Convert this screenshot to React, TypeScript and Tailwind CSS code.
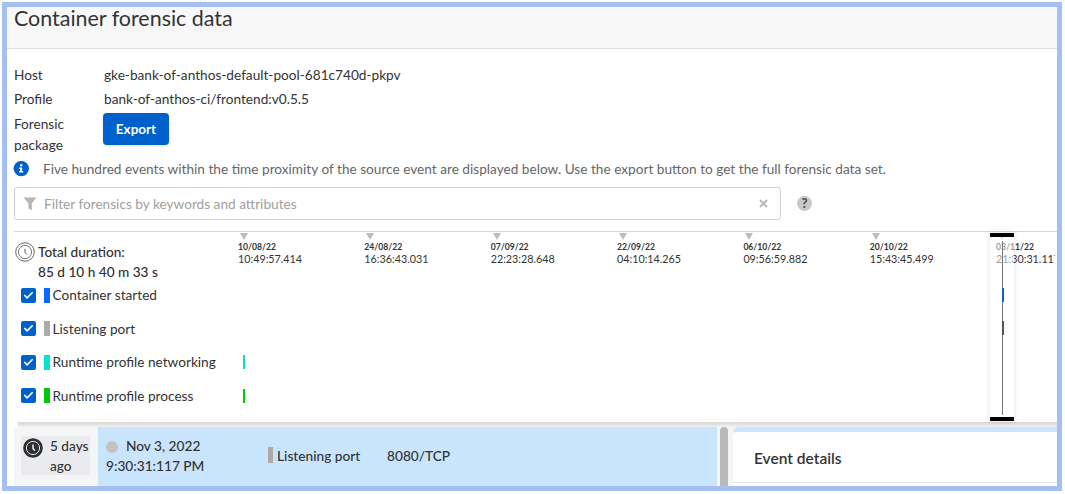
import { Check } from "lucide-react";

const ticks = [
  ["10/08/22", "10:49:57.414"],
  ["24/08/22", "16:36:43.031"],
  ["07/09/22", "22:23:28.648"],
  ["22/09/22", "04:10:14.265"],
  ["06/10/22", "09:56:59.882"],
  ["20/10/22", "15:43:45.499"],
  ["03/11/22", "21:30:31.117"],
];

const eventTypes = [
  { label: "Container started", color: "bg-[#0868ff]", mark: "" },
  { label: "Listening port", color: "bg-[#adabaa]", mark: "" },
  { label: "Runtime profile networking", color: "bg-[#00e5cf]", mark: "bg-[#00e0d0]" },
  { label: "Runtime profile process", color: "bg-[#00c90b]", mark: "bg-[#00c90b]" },
];

function InfoIcon() {
  return (
    <svg className="-ml-px block h-4 w-4 shrink-0" viewBox="0 0 16 16">
      <circle cx="8.3" cy="7.6" r="7.7" fill="#0060cc" />
      <circle cx="8.2" cy="4.3" r="1.2" fill="#fff" />
      <path d="M6.2 6.4h3v3.7h1v1.5H6.2v-1.5h1V7.9h-1z" fill="#fff" />
    </svg>
  );
}

function DurationIcon() {
  return (
    <svg className="block h-5 w-5 shrink-0" viewBox="0 0 20 20" fill="none" stroke="#555">
      <circle cx="10" cy="10" r="9.3" strokeWidth="0.9" />
      <circle cx="10" cy="10" r="6.6" strokeWidth="0.8" />
      <path d="M10 6.8v3.7l2 2" strokeWidth="1" />
    </svg>
  );
}

function AgoIcon() {
  return (
    <svg className="block h-5 w-5 shrink-0" viewBox="0 0 20 20" fill="none">
      <circle cx="10" cy="10" r="9.8" fill="#2f3032" />
      <circle cx="10" cy="10" r="6.6" stroke="#e9eaee" strokeWidth="1" />
      <path d="M10 6.6v3.8l1.8 2.2" stroke="#fff" strokeWidth="1.4" />
    </svg>
  );
}

function Timeline() {
  return (
    <section className="relative mr-[2px] h-[191px] shrink-0">
      <div className="-mr-[2px] h-px bg-[#d5d5d5]" />
      <div className="flex h-[46.5px]">
        <div className="flex w-[224px] shrink-0 pt-[10px] pl-px">
          <DurationIcon />
          <div className="pl-[3px] text-[13.65px] leading-[20px] font-medium text-[#2f3032]">
            <div>Total duration:</div>
            <div>85 d 10 h 40 m 33 s</div>
          </div>
        </div>
        <div className="flex h-[48px] flex-1 overflow-hidden">
          {ticks.map(([date, time]) => (
            <div key={date} className="w-[126.35px] shrink-0 pt-px text-[#333]">
              <svg className="ml-[2px] block h-[7px] w-2" viewBox="0 0 8 7">
                <path d="M0 0h8L4 7z" fill="#bcbcbc" />
              </svg>
              <div className="pt-[2px] text-[8.6px] leading-[11px] font-bold">{date}</div>
              <div className="text-[10.75px] leading-[12px]">{time}</div>
            </div>
          ))}
        </div>
      </div>
      <div className="flex flex-col pl-[7px]">
        {eventTypes.map((e) => (
          <div key={e.label} className="flex h-[33.5px] items-center">
            <span className="flex h-[15px] w-[15px] shrink-0 items-center justify-center rounded-[2px] bg-[#0060cc]">
              <Check size={11} strokeWidth={3.8} color="#fff" />
            </span>
            <span className={`ml-2 h-[15px] w-[6px] shrink-0 ${e.color}`} />
            <span className="w-[187px] shrink-0 pl-[2.6px] text-[13.65px] leading-[20px] whitespace-nowrap text-[#333]">{e.label}</span>
            {e.mark && <span className={`ml-[6px] h-[14px] w-[1.5px] ${e.mark}`} />}
          </div>
        ))}
      </div>
      <div className="absolute top-[2px] left-[976px] flex h-[188px] w-6 flex-col bg-white/50 shadow-[0_0_6px_rgba(0,0,0,0.12)]">
        <div className="h-1 bg-black" />
        <div className="relative flex flex-1 justify-center">
          <span className="mt-1 mb-[2px] w-px bg-[#777]" />
          <span className="absolute top-[51px] left-3 h-[14px] w-[1.5px] bg-[#1160cc]" />
          <span className="absolute top-[84px] left-3 h-[14px] w-[1.5px] bg-[#555]" />
        </div>
        <div className="h-1 bg-black" />
      </div>
    </section>
  );
}

export default function App() {
  return (
    <div className="h-[494px] w-[1065px] overflow-hidden bg-white pt-[2px] pl-[2px] font-['Lato',sans-serif] text-[#333]">
      <div className="flex h-[489px] w-[1060px] flex-col overflow-hidden border-[5px] border-[#a4bff2] bg-white">
        <header className="h-[42px] shrink-0 border-b border-[#dedede] bg-[#f8f8f8] pl-[7px] text-[21.45px] leading-[22px]">
          Container forensic data
        </header>
        <div className="flex shrink-0 flex-col pl-[7px]">
          <dl className="grid grid-cols-[89px_auto] pt-[14px] text-[13.65px]">
            <dt className="h-6 leading-6">Host</dt>
            <dd className="h-6 pl-px leading-6">gke-bank-of-anthos-default-pool-681c740d-pkpv</dd>
            <dt className="h-6 leading-6">Profile</dt>
            <dd className="h-6 pl-px leading-6">bank-of-anthos-ci/frontend:v0.5.5</dd>
            <dt className="h-[46px] w-[60px] pt-[3px] leading-[21px]">Forensic package</dt>
            <dd className="pt-[2px]">
              <button className="h-8 w-[66px] rounded-[4px] bg-[#0060cc] pt-px text-[13.5px] font-bold text-white shadow-sm">Export</button>
            </dd>
          </dl>
          <div className="flex h-[30px] items-center pb-[6px] text-[13.65px] text-[#666]">
            <InfoIcon />
            <span className="pl-[14px]">
              Five hundred events within the time proximity of the source event are displayed below. Use the export button to get the full forensic data set.
            </span>
          </div>
          <div className="flex h-[44px] items-start">
            <div className="flex h-[33px] w-[767px] items-center rounded-[3px] border border-[#d2d2d2] pr-3 pl-2 text-[13.65px] text-[#a0a0a0]">
              <svg className="mr-[7px] block h-[14px] w-[14px] shrink-0" viewBox="0 0 14 14">
                <path d="M.5.4h13L8.8 6.3v7.2L5.4 11V6.3z" fill="#b5b5b5" />
              </svg>
              <span className="flex-1 pt-px">Filter forensics by keywords and attributes</span>
              <svg className="block h-[9px] w-[9px]" viewBox="0 0 9 9">
                <path d="M1 1l7 7M8 1L1 8" stroke="#b5b5b5" strokeWidth="1.8" />
              </svg>
            </div>
            <span className="mt-[9px] ml-4 flex h-[15px] w-[15px] items-center justify-center rounded-full bg-[#c8c8c8] text-[13px] leading-[15px] font-black text-[#555]">?</span>
          </div>
          <Timeline />
        </div>
        <div className="flex flex-1 flex-col pl-[7px]">
          <div className="ml-1 h-[5px] shrink-0 bg-linear-to-b from-[#d6d6d6] to-[#f1f1f1]" />
          <div className="flex flex-1 bg-[#f5f5f5]">
            <div className="w-[84px] shrink-0 pt-[9px] pl-[7px]">
              <div className="flex h-[39px] w-[69px] bg-[#eaebef] pl-[2px]">
                <div className="pt-[2px]">
                  <AgoIcon />
                </div>
                <div className="pl-[7px] text-[13.65px] leading-[20px] font-medium whitespace-nowrap">
                  5 days
                  <br />
                  ago
                </div>
              </div>
            </div>
            <div className="flex w-[619px] shrink-0 bg-[#c9e4fd] text-[13.7px] font-medium">
              <div className="w-[170px] pt-[9px] pl-2 leading-[20px]">
                <div className="flex items-center">
                  <span className="mt-[2px] mr-2 h-3 w-3 rounded-full bg-[#c3c3c3]" />
                  Nov 3, 2022
                </div>
                <div>9:30:31:117 PM</div>
              </div>
              <div className="flex h-[58px] items-center">
                <span className="mb-[3px] h-4 w-[5px] bg-[#aeaaa8]" />
                <span className="w-[114px] pl-1">Listening port</span>
                <span>8080/TCP</span>
              </div>
            </div>
            <div className="mr-[5px] ml-[3px] w-2 shrink-0 rounded-t-[4px] bg-[#b9b9b9]" />
            <div className="flex-1 rounded-tl-[6px] border-t-[5px] border-[#c9e4fd] bg-white">
              <div className="h-[51px] border-b border-[#e5e5e5] pl-[21px] text-[15.5px] leading-[52px] font-semibold">Event details</div>
            </div>
          </div>
        </div>
      </div>
    </div>
  );
}
